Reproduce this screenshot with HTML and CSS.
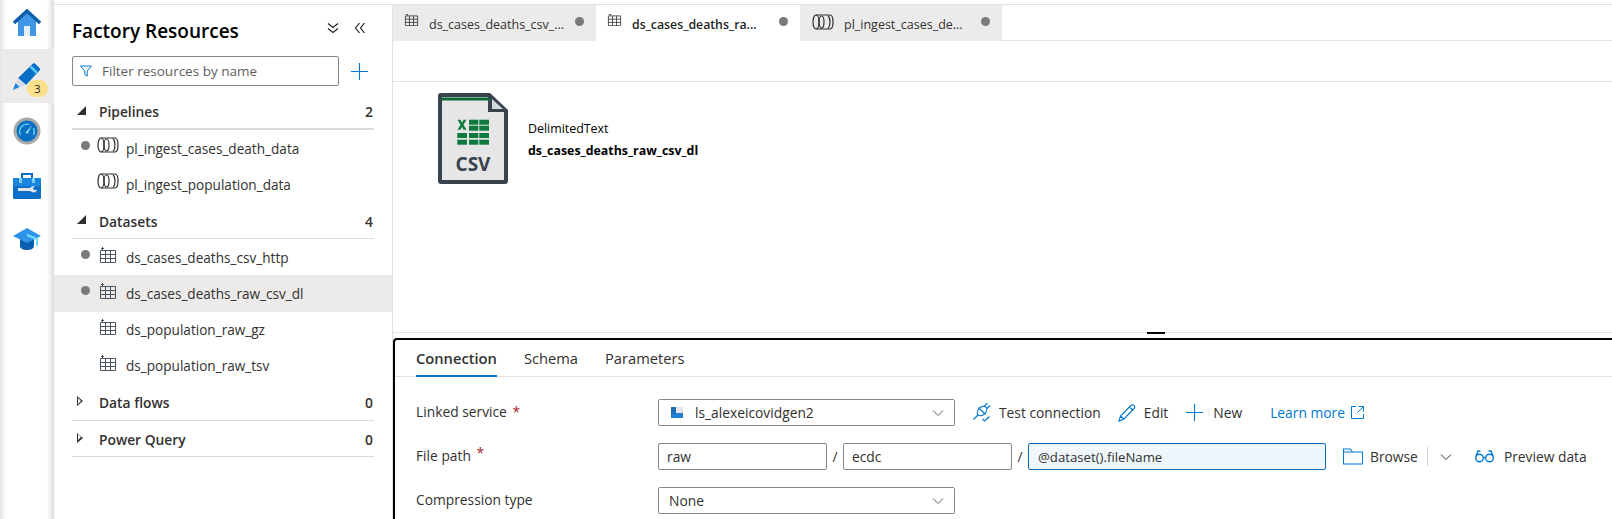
FILE: index.html
```html
<!DOCTYPE html>
<html lang="en">
<head>
<meta charset="UTF-8">
<meta name="viewport" content="width=device-width, initial-scale=1.0">
<link rel="stylesheet" href="styles.css">
<title>Factory Resources</title>
</head>
<body>
  <svg class="defs" width="0" height="0">
    <symbol id="i-pipe" viewBox="0 0 22 16">
      <g fill="none" stroke="#323130" stroke-width="1.200">
        <ellipse cx="4" cy="8" rx="3" ry="7"/>
        <ellipse cx="9.500" cy="8" rx="2.500" ry="6"/>
        <path d="M4 1h14c2 0 3 3 3 7s-1 7-3 7H4"/>
        <path d="M16 1.500c1.500 1.500 2 4 2 6.500s-.5 5-2 6.500"/>
      </g>
    </symbol>
    <symbol id="i-table" viewBox="0 0 16 16">
      <g fill="none" stroke="currentColor" stroke-width="1">
        <path d="M.5 3.500h15v12H.5zM.5 7.500h15M.5 11.500h15M5.500 3.500v12M10.500 3.500v12"/>
        <path d="M2.500 0v3M1 1.500h3"/>
      </g>
    </symbol>
    <symbol id="i-chev" viewBox="0 0 12 8">
      <path d="M1 1.500l5 5 5-5" fill="none" stroke="#605e5c" stroke-width="1"/>
    </symbol>
    <symbol id="i-plug" viewBox="0 0 18 19">
      <g fill="none" stroke="#0078d4" stroke-width="1.200">
        <ellipse cx="9" cy="8" rx="5.500" ry="3.800" transform="rotate(-45 9 8)"/>
        <path d="M5.500 4.500l7 7M11.500 3L14.500 0M14 5.500l3-3M5 12l-4.500 4.500"/>
        <path d="M9.500 16l2 2 5-4.500"/>
      </g>
    </symbol>
  </svg>

  <nav class="rail">
    <div class="rail-item rail-home">
      <svg width="28" height="27" viewBox="0 0 28 27">
        <path d="M5 12L14 3l9 9v15H5z" fill="#3f97e6"/>
        <path d="M1 14L14 2l13 12" fill="none" stroke="#0f5ea8" stroke-width="3.500"/>
        <rect x="11" y="17" width="6" height="10" fill="#e8eef5"/>
      </svg>
    </div>
    <div class="rail-item rail-author">
      <svg width="28" height="27" viewBox="0 0 28 27">
        <path d="M5 15L20 .5q1-.5 2 0l5 5q.5 1 0 1.500L13 22z" fill="#0a6fc9"/>
        <path d="M17.500 3.500L24 10" stroke="#5ecbf0" stroke-width="2.500"/>
        <path d="M5 15l8 7-11 4z" fill="#d5dbe2"/>
        <path d="M2.500 20l4 4L0 27z" fill="#1a86e0"/>
      </svg>
      <span class="badge">3</span>
    </div>
    <div class="rail-item">
      <svg width="28" height="28" viewBox="0 0 28 28">
        <circle cx="14" cy="14" r="13.500" fill="#a9a9a9"/>
        <circle cx="14" cy="14" r="10.500" fill="#0b6fc4"/>
        <path d="M7.500 18a7.500 7.500 0 0 1 9-10.500M20.500 11a7.500 7.500 0 0 1 0 7" fill="none" stroke="#6ccdf2" stroke-width="1.300"/>
        <path d="M12.500 15.500L19 8l-4.500 9z" fill="#8fdcf7"/>
      </svg>
    </div>
    <div class="rail-item">
      <svg width="28" height="27" viewBox="0 0 28 27">
        <path d="M9 6V2h10v4" fill="none" stroke="#0a6fc9" stroke-width="2"/>
        <rect y="6" width="28" height="21" rx="1" fill="#0a6fc9"/>
        <rect y="6" width="28" height="8" fill="#1a86e0"/>
        <rect x="6" y="6" width="3" height="5" fill="#7bd0f2"/>
        <rect x="19" y="6" width="3" height="5" fill="#7bd0f2"/>
        <path d="M5 16h12c1-1.500 3-2 5-2l-2 2 1 2h3c-.5 2-3 3-5 2l-2-1H5z" fill="#e3e6e8"/>
      </svg>
    </div>
    <div class="rail-item">
      <svg width="28" height="22" viewBox="0 0 28 22">
        <path d="M7 10h14v8c0 2.500-3 4-7 4s-7-1.500-7-4z" fill="#0a5fb0"/>
        <path d="M14 0l14 8-14 7L0 8z" fill="#2f93e8"/>
        <path d="M14 7l10 4v7" fill="none" stroke="#6fe0f5" stroke-width="2"/>
      </svg>
    </div>
  </nav>

  <div class="workspace">
    <aside class="sidebar">
      <div class="side-title">
        <h1>Factory Resources</h1>
        <span class="title-btns">
          <svg width="12" height="12" viewBox="0 0 12 12"><path d="M1 1.500l5 4 5-4M1 6.500l5 4 5-4" fill="none" stroke="#201f1e" stroke-width="1.200"/></svg>
          <svg width="12" height="12" viewBox="0 0 12 12"><path d="M5.500 1l-4 5 4 5M10.500 1l-4 5 4 5" fill="none" stroke="#201f1e" stroke-width="1.200"/></svg>
        </span>
      </div>
      <div class="side-filter">
        <div class="filter-box">
          <svg width="12" height="12" viewBox="0 0 12 12"><path d="M.5 1h11L7.200 6v5L4.800 9.500V6z" fill="none" stroke="#0078d4"/></svg>
          <span>Filter resources by name</span>
        </div>
        <svg width="17" height="17" viewBox="0 0 17 17"><path d="M8.500 0v17M0 8.500h17" stroke="#0078d4" stroke-width="1.100"/></svg>
      </div>

      <div class="group group-first"><i class="tri-open"></i><b>Pipelines</b><span>2</span></div>
      <div class="res"><i class="dot"></i><svg class="pipe" width="22" height="16"><use href="#i-pipe"/></svg><span>pl_ingest_cases_death_data</span></div>
      <div class="res"><svg class="pipe" width="22" height="16"><use href="#i-pipe"/></svg><span>pl_ingest_population_data</span></div>

      <div class="group"><i class="tri-open"></i><b>Datasets</b><span>4</span></div>
      <div class="res"><i class="dot"></i><svg class="tbl" width="16" height="16"><use href="#i-table"/></svg><span>ds_cases_deaths_csv_http</span></div>
      <div class="res selected"><i class="dot"></i><svg class="tbl" width="16" height="16"><use href="#i-table"/></svg><span>ds_cases_deaths_raw_csv_dl</span></div>
      <div class="res"><svg class="tbl" width="16" height="16"><use href="#i-table"/></svg><span>ds_population_raw_gz</span></div>
      <div class="res"><svg class="tbl" width="16" height="16"><use href="#i-table"/></svg><span>ds_population_raw_tsv</span></div>

      <div class="group"><i class="tri-closed"></i><b>Data flows</b><span>0</span></div>
      <div class="group"><i class="tri-closed"></i><b>Power Query</b><span>0</span></div>
    </aside>

    <main class="main">
      <div class="tabs">
        <div class="tab tab-1"><svg width="15" height="13" viewBox="0 1 16 14"><use href="#i-table"/></svg><span>ds_cases_deaths_csv_...</span><i class="dot"></i></div>
        <div class="tab tab-2 active"><svg width="15" height="13" viewBox="0 1 16 14"><use href="#i-table"/></svg><span>ds_cases_deaths_ra...</span><i class="dot"></i></div>
        <div class="tab tab-3"><svg width="22" height="16"><use href="#i-pipe"/></svg><span>pl_ingest_cases_de...</span><i class="dot"></i></div>
      </div>
      <div class="toolbar"></div>

      <div class="canvas">
        <svg width="70" height="91" viewBox="0 0 70 91">
          <path d="M3 0h49l18 17v71a3 3 0 0 1-3 3H3a3 3 0 0 1-3-3V3a3 3 0 0 1 3-3z" fill="#39434d"/>
          <path d="M4 4h46v15h16v68H4z" fill="#e6e6e6"/>
          <path d="M54 6l11 10H54z" fill="#d5d9dc"/>
          <rect x="4" y="4.500" width="48" height="3" fill="#0a6b35"/>
          <g fill="#0e7a3d">
            <rect x="31" y="26.700" width="9.300" height="5"/><rect x="41.300" y="26.700" width="9.700" height="5"/>
            <rect x="31" y="32.700" width="9.300" height="5"/><rect x="41.300" y="32.700" width="9.700" height="5"/>
            <rect x="19.300" y="40" width="9.700" height="5"/><rect x="31" y="40" width="9.300" height="5"/><rect x="41.300" y="40" width="9.700" height="5"/>
            <rect x="19.300" y="46.700" width="9.700" height="5"/><rect x="31" y="46.700" width="9.300" height="5"/><rect x="41.300" y="46.700" width="9.700" height="5"/>
            <path d="M19.500 26.700h3l1.500 3 1.500-3h3l-3 5 3 5h-3l-1.500-3-1.500 3h-3l3-5z"/>
          </g>
          <text x="35" y="78" text-anchor="middle" class="csv-label">CSV</text>
        </svg>
        <div class="canvas-info">
          <div>DelimitedText</div>
          <div class="canvas-name">ds_cases_deaths_raw_csv_dl</div>
        </div>
      </div>

      <div class="splitter"><span></span></div>

      <section class="panel">
        <div class="panel-tabs">
          <span class="on">Connection</span>
          <span>Schema</span>
          <span>Parameters</span>
        </div>
        <div class="form">
          <label>Linked service <em>*</em></label>
          <div class="line">
            <div class="select sel-main">
              <svg width="12" height="11" viewBox="0 0 12 11"><rect width="12" height="11" fill="#e4e7ea"/><rect y="6" width="12" height="5" fill="#1f7fd1"/><rect width="5" height="6" fill="#1f6fb5"/></svg>
              <span>ls_alexeicovidgen2</span>
              <svg class="chev" width="12" height="8"><use href="#i-chev"/></svg>
            </div>
            <a class="act act-test"><svg width="18" height="19"><use href="#i-plug"/></svg>Test connection</a>
            <a class="act act-edit"><svg width="18" height="18" viewBox="0 0 18 18"><path d="M1 17l1.500-5L13 1.500c1-1 2-1 3 0s1 2 0 3L6 15zM2.500 12L6 15M11.500 3l3.500 3.500" fill="none" stroke="#0078d4" stroke-width="1.100"/></svg>Edit</a>
            <a class="act act-new"><svg width="17" height="17" viewBox="0 0 17 17"><path d="M8.500 0v17M0 8.500h17" stroke="#0078d4" stroke-width="1.100"/></svg>New</a>
            <a class="learn">Learn more<svg width="13" height="13" viewBox="0 0 13 13"><path d="M5 .5H.5v12h12V8M7.500.5h5v5M12.500.5L6.500 6.500" fill="none" stroke="#0078d4"/></svg></a>
          </div>

          <label>File path <em class="up">*</em></label>
          <div class="line">
            <input class="inp inp-raw" type="text" value="raw">
            <span class="slash">/</span>
            <input class="inp inp-ecdc" type="text" value="ecdc">
            <span class="slash">/</span>
            <input class="inp inp-file" type="text" value="@dataset().fileName">
            <a class="act act-browse"><svg width="20" height="17" viewBox="0 0 20 17"><path d="M.5 16V1h7l2 3h10v12zM.5 4h9" fill="none" stroke="#0078d4" stroke-width="1.100"/></svg>Browse</a>
            <span class="sep"></span>
            <svg class="sep-chev" width="14" height="8" viewBox="0 0 12 8"><path d="M1 1.500l5 5 5-5" fill="none" stroke="#323130" stroke-width="1"/></svg>
            <a class="act act-preview"><svg width="19" height="13" viewBox="0 0 19 13"><g fill="none" stroke="#0078d4" stroke-width="1.400"><circle cx="4.500" cy="8" r="3.800"/><circle cx="14.500" cy="8" r="3.800"/><path d="M8.300 7.500h2.400M1 6l2-5h2.500M18 6l-2-5h-2.500"/></g></svg>Preview data</a>
          </div>

          <label>Compression type</label>
          <div class="line">
            <div class="select sel-main">
              <span class="none">None</span>
              <svg class="chev" width="12" height="8"><use href="#i-chev"/></svg>
            </div>
          </div>
        </div>
      </section>
    </main>
  </div>
</body>
</html>
```

FILE: styles.css
```css
body {
  margin: 0;
  display: flex;
  height: 519px;
  overflow: hidden;
  background-color: #fff;
  color: #323130;
  font-family: "Open Sans", Arial, sans-serif;
  font-size: 13.8px;
}

.defs {
  position: absolute;
}

/* left rail */
.rail {
  width: 54px;
  flex: none;
  background: linear-gradient(to right, #e4e4e4 0, #fff 6px, #fff 47px, #dcdcdc 54px);
}

.rail-item {
  height: 54px;
  display: flex;
  align-items: center;
  justify-content: center;
  position: relative;
}

.rail-home {
  height: 44px;
  margin-bottom: 5px;
}

.rail-author {
  margin-left: 2px;
  margin-bottom: 1px;
  padding-right: 3px;
  background-color: #edebe9;
}

.badge {
  position: absolute;
  left: 25px;
  top: 31px;
  width: 21px;
  height: 17px;
  border-radius: 9px;
  background-color: #fbe08c;
  text-align: center;
  font-size: 11px;
  line-height: 17px;
  color: #201f1e;
}

.workspace {
  flex: 1;
  display: flex;
  margin-top: 4px;
  border-top: 1px solid #e1e1e1;
  min-width: 0;
}

/* factory resources */
.sidebar {
  width: 338px;
  flex: none;
}

.side-title {
  display: flex;
  align-items: center;
  height: 51px;
  padding: 0 26px 0 18px;
}

.side-title h1 {
  flex: 1;
  margin: 0;
  font-size: 19px;
  font-weight: 600;
  color: #000;
}

.title-btns {
  display: flex;
  gap: 15px;
  margin-top: -5px;
}

.side-filter {
  display: flex;
  align-items: center;
  gap: 12px;
  padding-left: 18px;
}

.filter-box {
  width: 258px;
  height: 28px;
  border: 1px solid #8a8886;
  border-radius: 2px;
  display: flex;
  align-items: center;
  gap: 10px;
  padding-left: 7px;
  color: #605e5c;
  font-size: 13.5px;
}

.group {
  display: flex;
  align-items: center;
  box-sizing: border-box;
  height: 36.500px;
  margin: 0 18px;
  padding: 2px 0 0 5px;
  border-bottom: 1px solid #d9d9d9;
}

.group-first {
  margin-top: 7px;
  height: 37px;
  border-bottom-width: 2px;
}

.group b {
  flex: 1;
  margin-left: 13px;
  font-weight: 600;
}

.group span {
  font-weight: 600;
  padding-right: 1px;
}

.tri-open {
  width: 0;
  height: 0;
  border-bottom: 9px solid #323130;
  border-left: 9px solid transparent;
  margin-top: -3px;
}

.tri-closed {
  width: 0;
  height: 0;
  margin-top: -3px;
  margin-right: 3px;
  position: relative;
  border-left: 6px solid #323130;
  border-top: 5.500px solid transparent;
  border-bottom: 5.500px solid transparent;
}

.tri-closed::after {
  content: "";
  position: absolute;
  left: -5px;
  top: -3.500px;
  border-left: 3.500px solid #fff;
  border-top: 3.500px solid transparent;
  border-bottom: 3.500px solid transparent;
}

.res {
  height: 36.250px;
  box-sizing: border-box;
  display: flex;
  align-items: center;
  position: relative;
  padding-left: 43px;
  font-size: 13.600px;
}

.res .pipe {
  margin-top: -6px;
  margin-right: 7px;
}

.res .tbl {
  margin: -5px 10px 0 3px;
  color: #4a5560;
}

.res .dot {
  position: absolute;
  left: 27px;
  top: 11px;
}

.selected {
  background-color: #edebe9;
}

.dot {
  width: 9px;
  height: 9px;
  border-radius: 50%;
  background-color: #7a7a7a;
  flex: none;
}

/* main area */
.main {
  flex: 1;
  min-width: 0;
  border-left: 1px solid #e1e1e1;
}

.tabs {
  display: flex;
  height: 36px;
  box-sizing: border-box;
  border-bottom: 1px solid #e1e1e1;
}

.tab {
  height: 36px;
  display: flex;
  background-color: #ebebeb;
  align-items: flex-start;
  font-size: 12.500px;
  box-sizing: border-box;
  padding-left: 11px;
}

.tab svg {
  margin-top: 9px;
  flex: none;
  color: #323130;
}

.tab span {
  flex: 1;
  margin-top: 11px;
  margin-left: 10px;
}

.tab .dot {
  margin: 12px 12px 0 0;
}

.tab-1 {
  width: 203px;
}

.tab-2 {
  width: 204px;
}

.tab-3 {
  width: 202px;
  padding-left: 12px;
}

.tab.active {
  background-color: #fff;
  color: #201f1e;
  font-weight: 600;
  font-size: 12.300px;
}

.toolbar {
  height: 40px;
  border-bottom: 1px solid #e1e1e1;
}

.canvas {
  height: 250px;
  box-sizing: border-box;
  padding: 11px 0 0 45px;
  display: flex;
  align-items: flex-start;
}

.canvas-info {
  margin: 28px 0 0 20px;
  font-size: 12.400px;
  color: #000;
  line-height: 16px;
}

.canvas-name {
  margin-top: 6px;
  font-weight: 700;
}

.csv-label {
  font-family: "Open Sans", Arial, sans-serif;
  font-size: 19px;
  font-weight: 700;
  fill: #39434d;
}

.splitter {
  height: 6px;
  position: relative;
  border-top: 1px solid #e1e1e1;
  box-sizing: border-box;
}

.splitter span {
  position: absolute;
  left: 754px;
  top: -1px;
  width: 18px;
  height: 2px;
  background-color: #000;
}

.panel {
  border-top: 2px solid #000;
  border-left: 2px solid #000;
  border-top-left-radius: 4px;
  box-sizing: border-box;
  height: 181px;
  overflow: hidden;
}

.panel-tabs {
  display: flex;
  gap: 27px;
  height: 37px;
  padding-left: 21px;
  border-bottom: 1px solid #e1e1e1;
  box-sizing: border-box;
  font-size: 14.700px;
}

.panel-tabs span {
  line-height: 36px;
  height: 37px;
  box-sizing: border-box;
}

.panel-tabs .on {
  font-weight: 600;
  border-bottom: 2px solid #0078d4;
}

.form {
  display: grid;
  grid-template-columns: 242px 1fr;
  row-gap: 17px;
  padding: 22px 0 0 21px;
}

.form label {
  line-height: 25px;
  font-weight: 500;
}

.form em {
  color: #a4262c;
  font-style: normal;
  margin-left: 2px;
}

.form em.up {
  position: relative;
  top: -3px;
}

.line {
  display: flex;
  align-items: center;
  height: 27px;
}

.select {
  height: 27px;
  box-sizing: border-box;
  border: 1px solid #8a8886;
  border-radius: 2px;
  display: flex;
  align-items: center;
  position: relative;
}

.sel-main {
  width: 297px;
  flex: none;
  padding-left: 12px;
}

.sel-main span {
  margin-left: 12px;
}

.sel-main .none {
  margin-left: -2px;
}

.chev {
  position: absolute;
  right: 10px;
  top: 9px;
}

.act {
  display: inline-flex;
  align-items: center;
  gap: 8px;
  flex: none;
}

.act-test {
  margin-left: 18px;
}

.act-edit {
  margin-left: 17px;
}

.act-new {
  margin-left: 18px;
  gap: 10px;
}

.learn {
  margin-left: 28px;
  display: inline-flex;
  align-items: center;
  gap: 6px;
  color: #0078d4;
}

.inp {
  height: 27px;
  box-sizing: border-box;
  border: 1px solid #8a8886;
  border-radius: 2px;
  padding: 0 8px;
  font: inherit;
  color: #323130;
  flex: none;
}

.inp-raw {
  width: 169px;
}

.inp-ecdc {
  width: 169px;
}

.inp-file {
  width: 298px;
  padding-left: 9px;
  background-color: #eff6fc;
  border-color: #0f6cbd;
  font-size: 13.200px;
}

.slash {
  width: 16px;
  text-align: center;
  flex: none;
}

.act-browse {
  margin-left: 17px;
  gap: 7px;
}

.sep {
  width: 1px;
  height: 19px;
  background-color: #d2d0ce;
  margin-left: 9px;
  flex: none;
}

.sep-chev {
  margin-left: 11px;
  flex: none;
}

.act-preview {
  margin-left: 22px;
  gap: 10px;
}
```
